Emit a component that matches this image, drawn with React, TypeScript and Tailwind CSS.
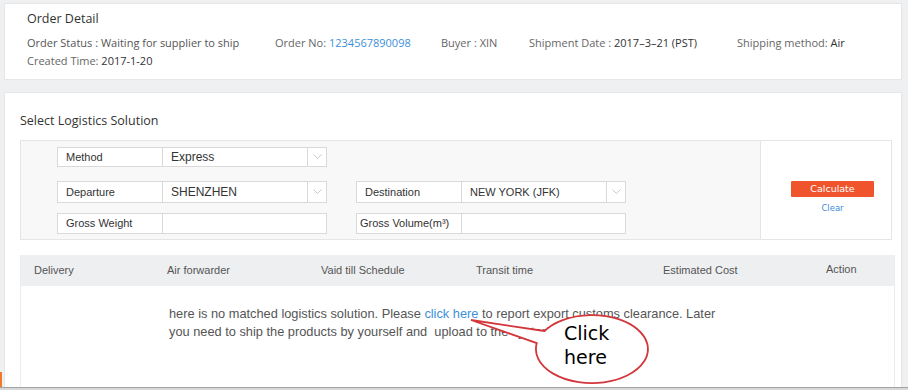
import React from "react";

const Chevron = () => (
  <svg width="9" height="6" viewBox="0 0 9 6" fill="none">
    <polyline points="0.5,0.5 4.5,4.5 8.5,0.5" stroke="#c9c9c9" strokeWidth="1" />
  </svg>
);

const Label = ({ text, className = "" }: { text: string; className?: string }) => (
  <div className={`w-[106px] h-full bg-white border border-[#d9d9d9] flex items-center pl-[8px] text-[11px] text-[#333] ${className}`}>
    {text}
  </div>
);

const Select = ({ value, w, small }: { value: string; w: string; small?: boolean }) => (
  <div className="flex h-full">
    <div className={`${w} h-full bg-white border border-l-0 border-[#d9d9d9] flex items-center pl-[8px] text-[#333] ${small ? "text-[11px]" : "text-[12px]"}`}>
      {value}
    </div>
    <div className="w-[19px] h-full bg-white border border-l-0 border-[#d9d9d9] flex items-center justify-center">
      <Chevron />
    </div>
  </div>
);

export default function App() {
  return (
    <div className="w-[908px] h-[390px] relative overflow-hidden bg-[#eff0f2]" style={{ fontFamily: '"Open Sans", "Noto Sans", sans-serif' }}>
      <div className="h-[3px]" />

      {/* order detail */}
      <div className="ml-[4px] w-[898px] h-[77px] bg-white border border-[#e6e6e6] pl-[22px] pt-[6px] text-[11px] text-[#666]">
        <div className="text-[12.5px] leading-[18px] text-[#333]">Order Detail</div>
        <div className="flex leading-[18px] mt-[6px]">
          <div className="w-[248px] text-[#555]">Order Status : Waiting for supplier to ship</div>
          <div className="w-[166px]">
            Order No: <span className="text-[#3d8fda]">1234567890098</span>
          </div>
          <div className="w-[88px]">Buyer : XIN</div>
          <div className="w-[208px]">
            Shipment Date : <span className="text-[#333]">2017–3–21 (PST)</span>
          </div>
          <div>
            Shipping method: <span className="text-[#333]">Air</span>
          </div>
        </div>
        <div className="leading-[18px]">
          Created Time: <span className="text-[#333]">2017-1-20</span>
        </div>
      </div>

      <div className="h-[12px]" />

      {/* logistics */}
      <div className="ml-[4px] w-[898px] h-[295px] bg-white border border-[#e6e6e6] border-b-0 pl-[15px] pt-[19px] overflow-hidden">
        <div className="text-[12.5px] leading-[18px] text-[#333]">Select Logistics Solution</div>

        <div className="mt-[10px] w-[872px] h-[100px] border border-[#e5e5e5] flex" style={{ fontFamily: '"Liberation Sans", Arial, sans-serif' }}>
          <div className="w-[739px] h-full bg-[#f8f8f8] pl-[36px] pt-[6px]">
            <div className="flex h-[20px]">
              <Label text="Method" />
              <Select value="Express" w="w-[145px]" />
            </div>
            <div className="flex h-[22px] mt-[14px]">
              <Label text="Departure" />
              <Select value="SHENZHEN" w="w-[145px]" />
              <Label text="Destination" className="ml-[29px]" />
              <Select value="NEW YORK (JFK)" w="w-[145px]" small />
            </div>
            <div className="flex h-[21px] mt-[10px]">
              <Label text="Gross Weight" />
              <div className="w-[164px] h-full bg-white border border-l-0 border-[#d9d9d9]" />
              <div className="ml-[29px] w-[106px] h-full bg-white border border-[#d9d9d9] flex items-center pl-[3px] text-[11px] text-[#333]">
                Gross Volume(m³)
              </div>
              <div className="w-[164px] h-full bg-white border border-l-0 border-[#d9d9d9]" />
            </div>
          </div>
          <div className="flex-1 h-full bg-white border-l border-[#e5e5e5] pl-[30px] pt-[40px]">
            <div className="w-[83px] flex flex-col items-center" style={{ fontFamily: '"DejaVu Sans", Lato, sans-serif' }}>
              <div className="w-[83px] h-[16px] bg-[#f0542c] rounded-[1px] text-white text-[9.5px] flex items-center justify-center">
                Calculate
              </div>
              <div className="mt-[5px] text-[8.5px] text-[#3d8fda]">Clear</div>
            </div>
          </div>
        </div>

        <div className="mt-[15px] w-[875px] h-[200px] border-r border-l border-[#ececec]" style={{ fontFamily: '"Liberation Sans", Arial, sans-serif' }}>
          <div className="h-[31px] bg-[#eeeff1] flex items-center pl-[13px] text-[11px] text-[#555]">
            <div className="w-[133px]">Delivery</div>
            <div className="w-[154px]">Air forwarder</div>
            <div className="w-[155px]">Vaid till Schedule</div>
            <div className="w-[187px]">Transit time</div>
            <div className="w-[163px]">Estimated Cost</div>
            <div className="mt-[-3px]">Action</div>
          </div>
          <div className="pl-[148px] pt-[19px] text-[12.8px] leading-[18px] text-[#555]">
            <div>
              here is no matched logistics solution. Please <span className="text-[#3d8fda]">click here</span> to report export customs clearance. Later
            </div>
            <div>you need to ship the products by yourself and&nbsp; upload to the system.</div>
          </div>
        </div>
      </div>

      {/* bottom edge */}
      <div className="h-[1px] bg-[#a3a3a3]" />
      <div className="h-[2px] bg-[#d8d8d8]" />
      <div className="absolute left-0 top-[372px] w-[2px] h-[15px] bg-[#f07a2a]" />

      {/* callout */}
      <div className="absolute left-[460px] top-[305px] w-[200px] h-[85px]">
        <svg width="200" height="85" viewBox="0 0 200 85" className="absolute left-0 top-0">
          <path d="M 84.5 26 L 11 15 L 76.8 38.1 A 56 34 0 1 0 84.5 26 Z" fill="white" stroke="#d3363b" strokeWidth="1.8" />
        </svg>
        <div className="absolute left-[104px] top-[16px] text-[19px] leading-[24px] text-black" style={{ fontFamily: '"DejaVu Sans", Verdana, sans-serif' }}>
          <div>Click</div>
          <div>here</div>
        </div>
      </div>
    </div>
  );
}
